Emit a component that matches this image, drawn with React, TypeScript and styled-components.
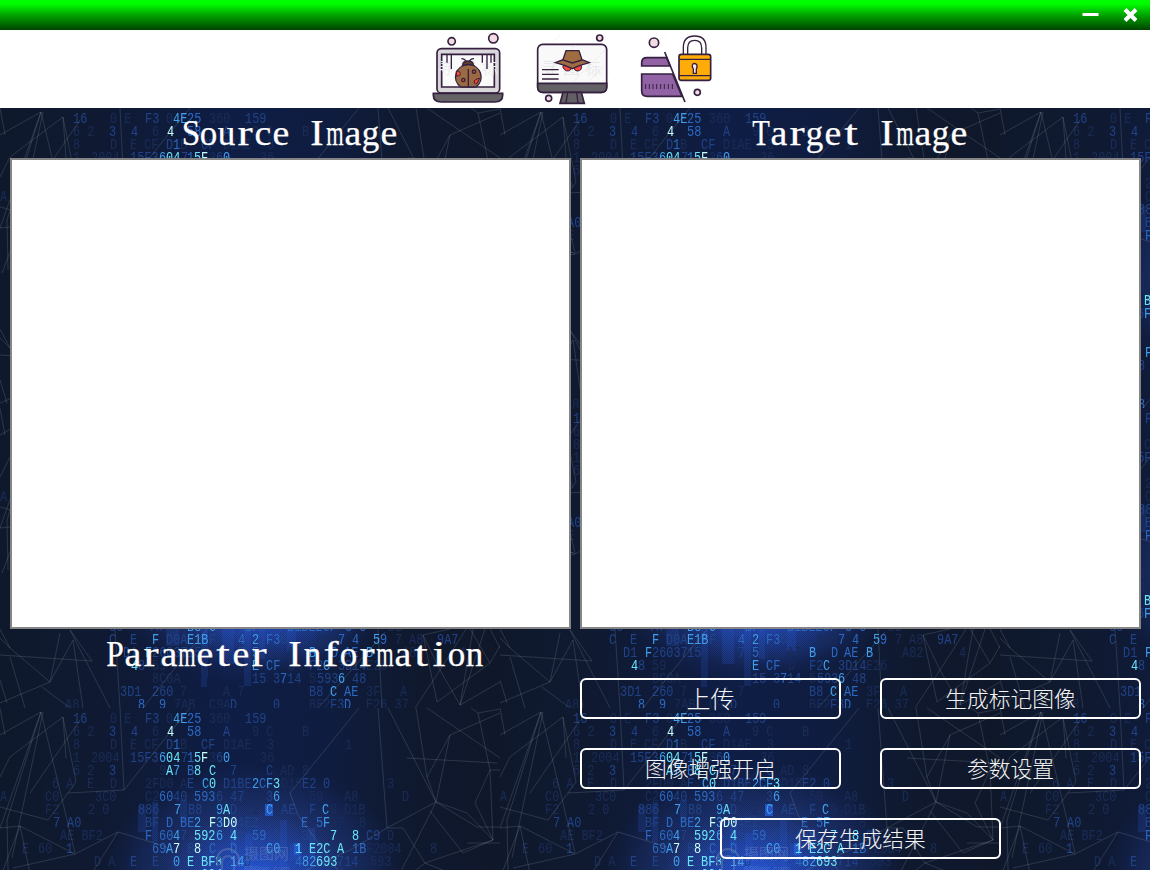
import React from "react";
import styled, { createGlobalStyle } from "styled-components";

const Global = createGlobalStyle`
  * { box-sizing: border-box; }
  body { margin: 0; background: #10182b; overflow: hidden; }
`;

const Window = styled.div`
  width: 1150px;
  height: 870px;
  display: flex;
  flex-direction: column;
  overflow: hidden;
  color: #fff;
`;

const TitleBar = styled.header`
  height: 30px;
  flex: none;
  display: flex;
  justify-content: flex-end;
  align-items: stretch;
  background: linear-gradient(#00ff00 0%, #00fa00 14%, #00a800 48%, #004400 100%);
`;

const WindowButton = styled.button`
  width: 40px;
  border: 0;
  padding: 0;
  background: none;
  svg { display: block; }
`;

const Toolbar = styled.nav`
  height: 78px;
  flex: none;
  display: flex;
  justify-content: center;
  gap: 5px;
  background: #fff;
`;

const ToolButton = styled.button`
  width: 100px;
  height: 78px;
  padding: 0;
  border: 0;
  background: none;
  svg { display: block; }
`;

const Main = styled.main`
  position: relative;
  flex: 1;
  isolation: isolate;
  display: grid;
  grid-template-columns: 561px 561px;
  grid-template-rows: 50px 471px 1fr;
  column-gap: 9px;
  padding: 0 9px 0 10px;
  overflow: hidden;
`;

const Backdrop = styled.svg`
  position: absolute;
  inset: 0;
  z-index: -1;
  width: 1150px;
  height: 762px;
`;

const Heading = styled.h2<{ $shift?: number }>`
  margin: 0 2px 0 0;
  height: 50px;
  padding: 2px 0 0 ${(p) => p.$shift ?? 0}px;
  display: flex;
  justify-content: center;
  font: 400 35px/48px "Liberation Serif", serif;
  -webkit-text-stroke: 0.25px #fff;
  white-space: pre;
`;

const Cell = styled.span<{ $squeeze: number }>`
  width: 18px;
  display: flex;
  justify-content: center;
  transform: scaleX(${(p) => p.$squeeze});
`;

const Canvas = styled.div`
  background: #fff;
  border: 2px solid #858585;
`;

const Actions = styled.div`
  display: flex;
  flex-wrap: wrap;
  justify-content: space-between;
  align-content: flex-start;
  row-gap: 29px;
  padding-top: 49px;
`;

const LastRow = styled.div`
  width: 100%;
  display: flex;
  justify-content: center;
`;

const ActionButton = styled.button<{ $wide?: boolean; $size?: number }>`
  width: ${(p) => (p.$wide ? 281 : 261)}px;
  height: 41px;
  padding: 0 0 2px;
  border: 2px solid #fff;
  border-radius: 6px;
  background: transparent;
  color: #f4f4f4;
  font: 300 ${(p) => p.$size ?? 21.8}px/35px "Noto Sans CJK SC", sans-serif;
`;

const squeeze: Record<string, number> = { m: 0.64, P: 0.9, T: 0.82, S: 0.95, n: 1, u: 1, I: 1.15, r: 1.3, t: 1.4, f: 1.3, c: 1.08, e: 1.08, i: 1.35, a: 1.08 };

function Title({ text, shift }: { text: string; shift?: number }) {
  return (
    <Heading $shift={shift}>
      {text.split("").map((c, i) => (
        <Cell key={i} $squeeze={squeeze[c] ?? 1}>{c}</Cell>
      ))}
    </Heading>
  );
}

const tones = ["#182a56", "#1f4187", "#2a68c4", "#3f9fee", "#68e4fa", "#c8ffff"];

// Digits of the code rain: baseline, then [x, text, tone].
const rain: [number, [number, string, number][]][] = [
  [15, [[73, "16", 1], [110, "0 E", 0], [145, "F3", 1], [166, "0", 0], [173, "4E", 3], [187, "25", 2], [209, "360", 0], [245, "159", 1]]],
  [28, [[73, "6 2", 0], [109, "3", 1], [131, "4", 1], [152, "6", 0], [167, "4", 5], [187, "58", 2], [223, "A", 1], [252, "9 C", 0], [302, "B", 0]]],
  [41, [[73, "8", 0], [110, "D", 0], [130, "E", 0], [144, "CF", 0], [166, "D", 1], [173, "1", 2], [180, "B", 0], [201, "CF", 1], [223, "D1AE", 0], [267, "3", 0], [345, "1", 0]]],
  [54, [[73, "1", 0], [91, "2004", 0], [130, "15F3", 1], [159, "6", 3], [166, "04", 4], [181, "7", 1], [187, "1", 2], [194, "5", 4], [201, "F", 5], [209, "3", 0], [216, "6", 1], [223, "0", 3], [260, "36", 0]]],
  [67, [[73, "6 2", 0], [109, "3", 1], [159, "9", 0], [166, "A", 4], [173, "7", 3], [187, "B", 2], [194, "8", 4], [209, "C", 4], [230, "7", 1], [266, "C", 1], [280, "AD", 0], [302, "8", 0]]],
  [80, [[52, "6 A", 0], [87, "E", 0], [110, "D", 0], [145, "2FD0", 0], [180, "A", 0], [187, "E", 1], [202, "C", 3], [209, "0", 4], [223, "D1BE", 1], [252, "2", 3], [259, "C", 2], [266, "F", 3], [273, "3", 4], [281, "D15", 0], [302, "E2", 1], [323, "0", 1], [387, "3", 0]]],
  [93, [[0, "A", 0], [45, "C0", 0], [95, "3C0", 0], [145, "C2", 0], [159, "60", 2], [173, "40", 1], [194, "593", 2], [216, "6", 1], [230, "47", 1], [266, "3", 1], [273, "6", 3], [309, "59", 0], [344, "A8", 0], [402, "D", 0]]],
  [106, [[45, "F2", 0], [88, "2 0", 0], [138, "886", 1], [174, "7", 3], [188, "B8", 1], [216, "9", 3], [223, "A", 4], [230, "D", 1], [252, "2", 0], [266, "C", 3], [281, "AE", 1], [309, "F", 1], [322, "C", 3], [330, "0", 0], [344, "D1B", 0]]],
  [119, [[53, "7", 1], [67, "A0", 1], [145, "BF", 1], [166, "D", 2], [180, "BE", 2], [194, "2", 3], [209, "F", 5], [216, "3", 3], [223, "D0", 5], [237, "4E2", 1], [301, "E", 2], [316, "5", 2], [323, "F", 3], [330, "37", 0], [359, "8", 0]]],
  [132, [[60, "AE BF2", 0], [145, "F", 2], [159, "60", 2], [173, "4", 3], [180, "7", 1], [194, "592", 4], [216, "6", 3], [230, "4", 4], [237, "8", 1], [252, "59", 2], [273, "6", 1], [302, "35", 1], [330, "7", 4], [352, "8", 4], [366, "C9", 1], [387, "D", 0]]],
  [145, [[22, "E", 0], [38, "60", 0], [66, "1", 1], [152, "69", 2], [166, "A", 3], [173, "7", 5], [187, "B", 1], [194, "8", 5], [209, "C", 2], [230, "D", 2], [266, "C0", 3], [295, "1", 4], [309, "E2C", 4], [337, "A", 4], [352, "1B", 2], [366, "F2004", 0], [430, "8", 0]]],
  [158, [[94, "D A", 0], [130, "E", 1], [152, "E", 1], [173, "0", 3], [187, "E", 4], [194, "2", 1], [201, "BF3", 4], [216, "D", 1], [230, "14", 3], [244, "D", 1], [295, "4", 2], [302, "82", 3], [316, "693", 4], [337, "714", 1], [370, "593", 0]]],
  [171, [[141, "C8", 0], [201, "604", 4]]],
  [184, [[138, "3", 0], [195, "59A", 3]]],
  [197, [[144, "B", 4], [215, "CF1", 4]]],
  [210, [[137, "6", 1], [144, "F", 3], [223, "47", 4]]],
  [223, [[109, "35", 1], [151, "A7", 1], [187, "B8", 3], [209, "C", 3], [245, "BF", 2], [287, "B1BE2CF", 2], [345, "3 0", 2], [388, "DB", 0]]],
  [236, [[109, "C", 1], [130, "E", 1], [152, "F", 3], [166, "D0A", 1], [187, "E1B", 3], [209, "F", 1], [238, "4", 2], [252, "2", 3], [266, "F3", 2], [280, "6", 1], [316, "893", 0], [338, "7", 2], [352, "4", 2], [373, "5", 3], [380, "9", 2], [395, "7", 0], [409, "A8", 0], [437, "9A7", 1]]],
  [249, [[123, "D1", 1], [145, "F", 3], [152, "26037", 1], [187, "15", 1], [238, "7", 1], [252, "5", 2], [287, "A7", 0], [309, "B", 3], [331, "D", 2], [344, "AE", 2], [366, "B", 3], [402, "A82", 0], [459, "4", 0]]],
  [262, [[131, "4", 4], [138, "8", 1], [152, "59", 0], [252, "E", 3], [266, "CF", 2], [288, "D", 0], [309, "F2", 1], [323, "C", 3], [338, "3D", 1], [352, "14", 1], [366, "E26", 0]]],
  [275, [[152, "8C0A", 0], [252, "15", 1], [273, "3", 1], [280, "7", 2], [287, "14", 1], [309, "5", 0], [317, "593", 1], [338, "6", 3], [352, "48", 1]]],
  [288, [[120, "3D1", 1], [152, "260", 1], [180, "7", 0], [223, "A 7", 0], [309, "B8", 1], [330, "C", 3], [344, "AE", 2], [366, "3F", 0], [400, "A", 0]]],
  [301, [[65, "A8", 0], [138, "8", 2], [159, "9", 2], [174, "7AB", 0], [209, "C9A", 0], [230, "D", 1], [273, "0", 1], [309, "BE2", 0], [330, "F3", 1], [344, "D", 2], [366, "E26 37", 0]]],
];

const mesh = [
  "M0 27L41 4L75 145M41 4L7 112L8 162M41 4L0 120M43 4L12 150",
  "M0 69L10 49L63 9L76 74L48 112L0 99M80 12L30 85M0 0L5 27",
  "M68 85L124 82L167 28L190 0M120 0L124 82M63 9L66 50",
  "M167 139L118 124L75 146L20 118L0 120M75 146L13 160M118 124L92 165M20 118L2 165M20 118L31 170",
  "M110 300L70 222L92 253L0 247M83 300L73 232L50 274L0 295M60 225L50 274L10 240L0 221M42 279L70 300M10 249L25 300M0 272L7 295M10 240L0 230",
  "M115 221L120 300M143 300L175 260L210 218M318 300L385 224",
  "M359 0L290 85L298 107L340 165M378 0L387 120L350 142L300 165M388 0L436 94M407 50L497 55M416 0L427 69L436 94M427 0L500 50",
  "M500 5L450 27L427 69M450 27L436 94M490 62L475 95L493 132M478 5L490 62L493 132M471 0L478 5L500 1M490 62L500 62",
  "M387 120L436 94L477 119L500 119M436 94L467 105L493 132M436 94L400 165M430 103L463 145L493 132M387 120L403 120L425 155L493 132M425 155L450 165M412 165L425 155M467 135L500 135",
  "M423 227L437 294L490 255L470 221M415 300L440 262L423 227L450 221M440 262L460 297L473 221M460 297L485 221M460 297L500 274M490 255L510 221M440 262L470 215M490 221L500 240M378 221L382 300",
];

function CodeBackdrop() {
  return (
    <Backdrop aria-hidden="true">
      <defs>
        <linearGradient id="night">
          <stop offset="0" stopColor="#10192b" />
          <stop offset=".2" stopColor="#101a32" />
          <stop offset=".45" stopColor="#101f48" />
          <stop offset=".65" stopColor="#101e42" />
          <stop offset=".82" stopColor="#10192e" />
          <stop offset="1" stopColor="#101829" />
        </linearGradient>
        <radialGradient id="halo">
          <stop offset="0" stopColor="#2a4cae" stopOpacity=".9" />
          <stop offset=".5" stopColor="#253f8c" stopOpacity=".75" />
          <stop offset=".78" stopColor="#1c3270" stopOpacity=".5" />
          <stop offset="1" stopColor="#14265c" stopOpacity="0" />
        </radialGradient>
        <radialGradient id="core">
          <stop offset="0" stopColor="#2a66ff" stopOpacity=".85" />
          <stop offset=".55" stopColor="#2452d2" stopOpacity=".5" />
          <stop offset="1" stopColor="#2044a8" stopOpacity="0" />
        </radialGradient>
        <pattern id="grain" width="2" height="2" patternUnits="userSpaceOnUse">
          <path d="M0 0h1v1H0zM1 1h1v1H1z" fill="#0b132c" opacity=".22" />
        </pattern>
        <pattern id="code" width="500" height="300" patternUnits="userSpaceOnUse">
          <rect width="500" height="300" fill="url(#night)" />
          <ellipse cx="255" cy="166" rx="150" ry="112" fill="url(#halo)" />
          <ellipse cx="256" cy="170" rx="90" ry="64" fill="url(#core)" />
          <ellipse cx="262" cy="212" rx="100" ry="48" fill="url(#core)" opacity=".6" />
          <g fill="#2d68f5" opacity=".17">
            <path d="M138 98h8v26h-8zM152 94h6v40h-6zM180 92h7v22h-7zM230 110h7v28h-7zM245 125h8v37h-8zM280 112h7v50h-7zM290 136h12v16h-12zM309 120h6v34h-6z" />
            <path d="M166 221h13v17h-13zM201 210h7v60h-7zM222 221h12v35h-12zM244 218h7v60h-7zM259 221h6v30h-6zM287 215h9v28h-9zM201 265h6v14h-6z" />
          </g>
          <path d="M265 96h8v12h-8zM294 135h6v12h-6z" fill="#2b6cf8" opacity=".7" />
          <rect width="500" height="300" fill="url(#grain)" />
          <g fontFamily="Liberation Mono, monospace" fontSize="14.5">
            {rain.map(([y, runs]) =>
              runs.map(([x, text, tone]) => (
                <text key={`${x}-${y}`} transform={`translate(${x} ${y}) scale(.82 1)`} fill={tones[tone]} style={{ whiteSpace: "pre" }}>
                  {text}
                </text>
              ))
            )}
          </g>
          <g fill="none" stroke="#a9b7c9" strokeOpacity=".26" strokeWidth=".7">
            {mesh.map((d) => <path key={d} d={d} />)}
          </g>
          <g opacity=".36" fill="#8192b8">
            <path d="M217 158v-6a11 11 0 0 1 22 0v6M222 162v-8a6 6 0 0 1 12 0v8" fill="none" stroke="#8192b8" strokeWidth="2" />
            <text x="244" y="151" fontSize="15" fontFamily="Noto Sans CJK SC, sans-serif">摄图网</text>
            <text x="244" y="164" fontSize="9" fontFamily="Liberation Sans, sans-serif">699pic.com</text>
          </g>
        </pattern>
      </defs>
      <rect width="1150" height="762" fill="url(#code)" />
    </Backdrop>
  );
}

const ink = "#35203f";

function IconMark() {
  return (
    <path d="M40 80L110 10M50 170L190 30M90 205L250 45M170 210L255 125" stroke="#f3f3f3" strokeWidth="2" />
  );
}

function BugIcon() {
  return (
    <svg width="100" height="78" viewBox="0 0 300 234" fill="none" stroke={ink} strokeWidth="5">
      <IconMark />
      <circle cx="95" cy="34" r="11" fill="#f2dbe2" />
      <circle cx="220" cy="25" r="14" fill="#f2dbe2" />
      <rect x="51" y="56" width="188" height="133" rx="13" fill="#d9d7da" />
      <path d="M65 73H223V171H65Z" fill="#fafafa" />
      <text x="54" y="132" fontSize="48" fill="#ededee" stroke="none" fontFamily="Noto Sans CJK SC, sans-serif" letterSpacing="18">寻图标</text>
      <path d="M81 73V98M94 73V117M187 73V98M201 73V117M213 73V98" strokeWidth="4" />
      <path d="M124 86q12 0 14 10M162 86q-12 0-14 10" strokeWidth="4" />
      <path d="M128 106q0-13 16-13t16 13" fill="#5b402e" strokeWidth="4" />
      <path d="M123 171C92 150 108 104 145 104s53 46 22 67Z" fill="#9a6a43" strokeWidth="4" />
      <path d="M145 117V171M125 108q20-10 40 0" strokeWidth="4" />
      <path d="M109 123q10-2 12 7t-12 8zM179 145q-17 2-17 13 4 6 9 2z" fill="#fb4432" strokeWidth="3" />
      <circle cx="162" cy="125" r="5" fill="#c5523b" strokeWidth="4" />
      <circle cx="130" cy="150" r="5" fill="#c5523b" strokeWidth="4" />
      <path d="M40 190H248v6q0 20-24 20H64q-24 0-24-20Z" fill="#656366" />
    </svg>
  );
}

function SpyIcon() {
  return (
    <svg width="100" height="78" viewBox="0 0 300 234" fill="none" stroke={ink} strokeWidth="5">
      <IconMark />
      <circle cx="224" cy="24" r="9" fill="#f2dbe2" />
      <circle cx="71" cy="205" r="9" fill="#f2dbe2" />
      <rect x="38" y="43" width="207" height="144" rx="15" fill="#f9f9fa" />
      <path d="M70 130L150 46M145 155L240 60M190 155L240 105" stroke="#eeeeef" strokeWidth="3" />
      <text x="49" y="132" fontSize="48" fill="#e8e8ea" stroke="none" fontFamily="Noto Sans CJK SC, sans-serif" letterSpacing="18">寻图标</text>
      <path d="M38 160H245V172q0 15-15 15H53q-15 0-15-15Z" fill="#626064" />
      <path d="M114 187h55l9 33h-73Z" fill="#626064" />
      <path d="M128 188l-5 31M155 188l4 31" strokeWidth="4" />
      <path d="M114 107h24v11q-14 12-24-5zM146 107h23q3 16-13 16-10-2-10-12Z" fill="#ff473d" strokeWidth="3" />
      <path d="M91 98L114 89 123 62H162L171 89 193 98Q168 104 142 116 116 104 91 98Z" fill="#a06d42" strokeWidth="4" />
      <path d="M114 90L142 99 171 90" strokeWidth="4" />
      <path d="M51 119h50M51 133h50M51 147h50" strokeWidth="4" />
    </svg>
  );
}

function LockIcon() {
  return (
    <svg width="100" height="78" viewBox="0 0 300 234" fill="none" stroke={ink} strokeWidth="5">
      <IconMark />
      <circle cx="72" cy="38" r="14" fill="#f2dbe2" />
      <circle cx="202" cy="187" r="9" fill="#f2dbe2" />
      <path d="M35 108V98q0-15 16-15H110l10 25Z" fill="#9163a4" />
      <path d="M35 132H128L156 199H52q-17 0-17-17Z" fill="#9163a4" />
      <path d="M104 66L165 216" />
      <path d="M47 162v15M58 162v15M69 162v15M80 162v15M92 162v15M103 162v15M115 162v15M127 162v15" strokeWidth="3" />
      <path d="M160 73V52q0-34 34-34t34 34V73M173 73V54q0-23 21-23t21 23V73" strokeWidth="4" />
      <rect x="147" y="73" width="95" height="78" rx="7" fill="#ffac08" />
      <path d="M147 88h95M147 137h95" strokeWidth="4" />
      <path d="M190 117c-14-22 20-22 9 0v13h-9Z" fill="#f4e8f0" strokeWidth="4" />
    </svg>
  );
}

export default function App() {
  return (
    <>
      <Global />
      <Window>
        <TitleBar>
          <WindowButton aria-label="Minimize">
            <svg width="40" height="30"><path d="M14 14.5h13" stroke="#fff" strokeWidth="3" strokeLinecap="square" /></svg>
          </WindowButton>
          <WindowButton aria-label="Close">
            <svg width="40" height="30"><path d="M15 9.5l11 11M26 9.5l-11 11" stroke="#fff" strokeWidth="4" /></svg>
          </WindowButton>
        </TitleBar>
        <Toolbar>
          <ToolButton aria-label="Detect"><BugIcon /></ToolButton>
          <ToolButton aria-label="Disguise"><SpyIcon /></ToolButton>
          <ToolButton aria-label="Protect"><LockIcon /></ToolButton>
        </Toolbar>
        <Main>
          <CodeBackdrop />
          <Title text="Source Image" />
          <Title text="Target Image" />
          <Canvas />
          <Canvas />
          <Title text="Parameter Information" shift={10} />
          <Actions>
            <ActionButton $size={24}>上传</ActionButton>
            <ActionButton>生成标记图像</ActionButton>
            <ActionButton>图像增强开启</ActionButton>
            <ActionButton>参数设置</ActionButton>
            <LastRow>
              <ActionButton $wide>保存生成结果</ActionButton>
            </LastRow>
          </Actions>
        </Main>
      </Window>
    </>
  );
}
